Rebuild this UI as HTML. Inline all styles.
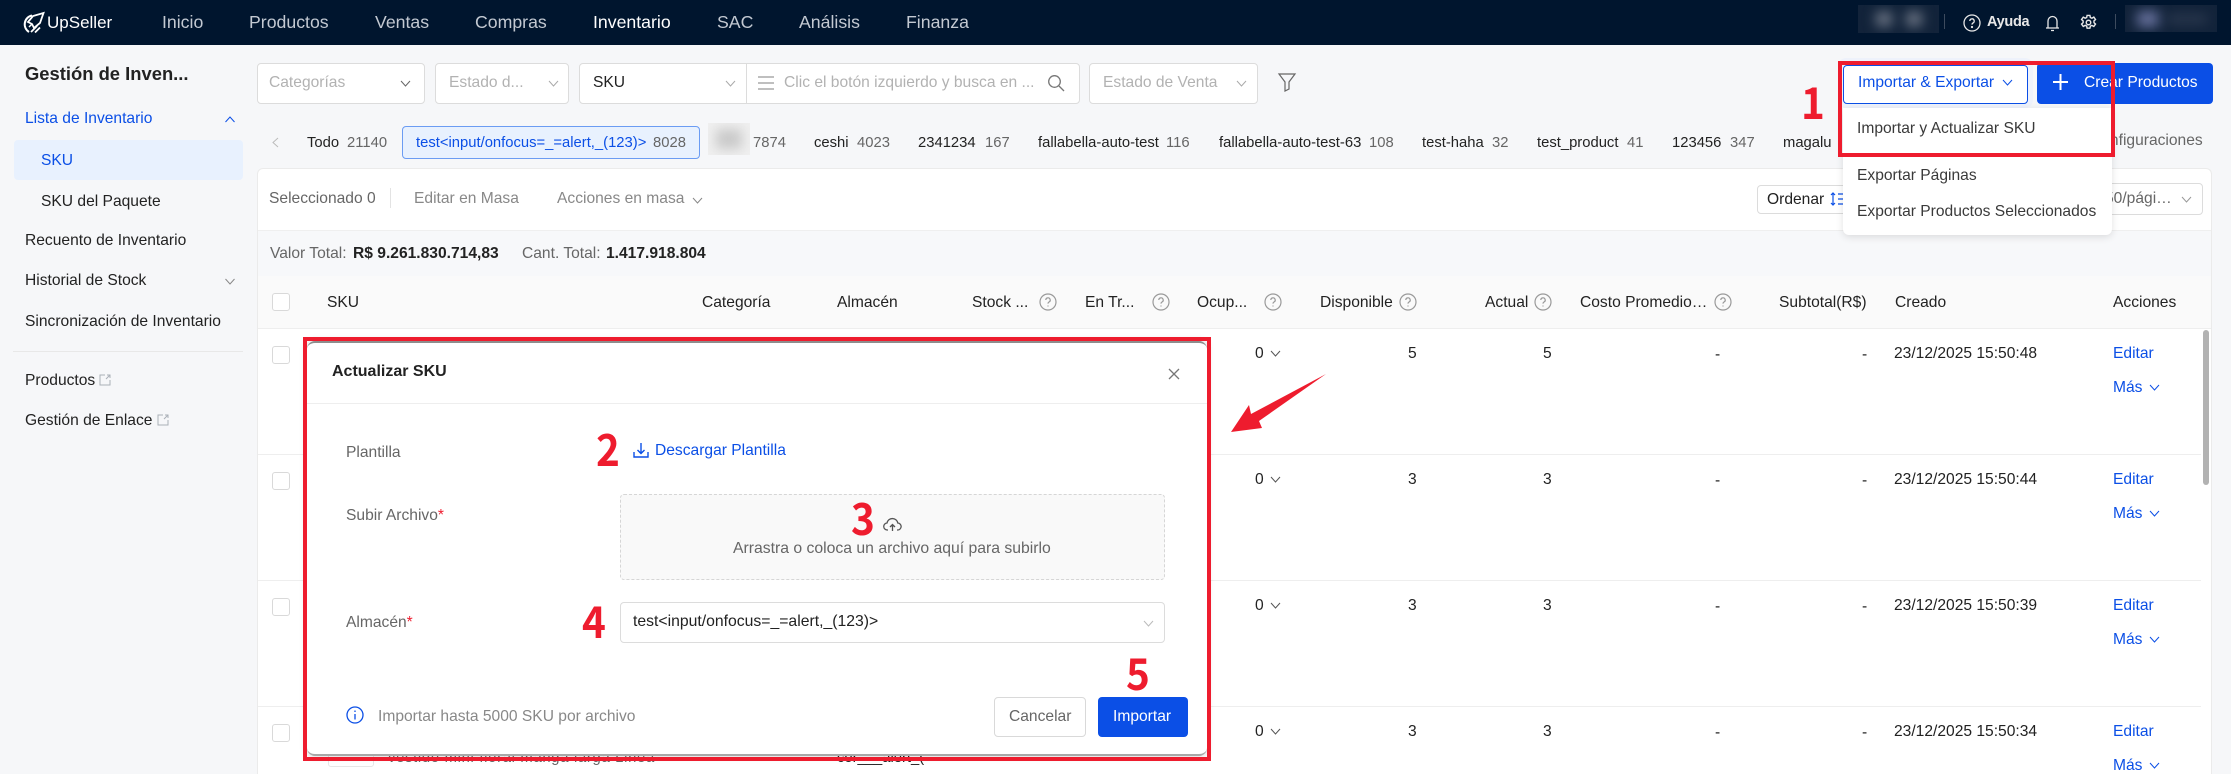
<!DOCTYPE html>
<html lang="es"><head><meta charset="utf-8"><title>UpSeller</title>
<style>
*{box-sizing:border-box}
html,body{margin:0;padding:0;width:2231px;height:774px;overflow:hidden;background:#f6f7f9}
body{position:relative;font-family:"Liberation Sans",Arial,sans-serif;font-size:15.6px;color:#333}
.t{position:absolute;line-height:20px;height:20px;white-space:nowrap;margin-top:1px}
.b{position:absolute}
.g{color:#888}.l{color:#0b4fe6}.k{color:#222}.m{color:#666}
.n{color:#c3c9d2;font-size:17.7px;margin-top:0}
.sel{position:absolute;background:#fff;border:1px solid #dcdcdc;border-radius:4px}
.ph{color:#b2b2b2}
.cb{position:absolute;width:18px;height:18px;border:1px solid #d9d9d9;border-radius:3px;background:#fff}
svg{position:absolute;overflow:visible}
.num{position:absolute;color:#ee1c2e;font-family:"Noto Sans CJK SC","Liberation Sans",sans-serif;font-weight:700;font-size:44px;line-height:44px;height:44px;transform:scaleX(.92);transform-origin:left center}
.blur{position:absolute;filter:blur(6px)}
</style></head><body>

<!-- NAV -->
<div class="b" style="left:0;top:0;width:2231px;height:45px;background:#00152e"></div>
<svg style="left:23px;top:12px" width="22" height="22" viewBox="0 0 22 22" fill="none" stroke="#fff"><path d="M9 3.500A9 9 0 0 0 6 20" stroke-width="2"/><path d="M20.500 1 L10 4 L5 10 L9 12 L11 16 L17 11 Z" stroke-width="1.800"/><path d="M8 20 L14 14 M12 20.500 L17 15.500" stroke-width="1.800"/><path d="M6 15 L9 12" stroke-width="1.500"/></svg>
<span class="t" style="left:47px;top:13px;color:#fff;font-size:17px;margin-top:0">UpSeller</span>
<span class="t n" style="left:162px;top:12px">Inicio</span>
<span class="t n" style="left:249px;top:12px">Productos</span>
<span class="t n" style="left:375px;top:12px">Ventas</span>
<span class="t n" style="left:475px;top:12px">Compras</span>
<span class="t n" style="left:593px;top:12px;color:#fff">Inventario</span>
<span class="t n" style="left:717px;top:12px">SAC</span>
<span class="t n" style="left:799px;top:12px">Análisis</span>
<span class="t n" style="left:906px;top:12px">Finanza</span>
<div class="b" style="left:1858px;top:5px;width:81px;height:28px;overflow:hidden;background:#12233a"><div class="blur" style="left:18px;top:7px;width:16px;height:14px;background:#6d7685"></div><div class="blur" style="left:48px;top:7px;width:16px;height:14px;background:#6d7685"></div></div>
<div class="b" style="left:1944px;top:14px;width:1px;height:15px;background:#3d4b5e"></div>
<svg style="left:1963px;top:14px" width="18" height="18" viewBox="0 0 18 18" fill="none" stroke="#e8e8e8" stroke-width="1.3"><circle cx="9" cy="9" r="8"/><path d="M6.800 7a2.200 2.200 0 1 1 3.200 2c-.7.4-1 .8-1 1.600"/><circle cx="9" cy="13" r=".5"/></svg>
<span class="t" style="left:1987px;top:12px;color:#e8e8e8;font-size:14.500px;font-weight:700;letter-spacing:-.3px;margin-top:0">Ayuda</span>
<svg style="left:2045px;top:14px" width="15" height="18" viewBox="0 0 15 18" fill="none" stroke="#e8e8e8" stroke-width="1.3"><path d="M1 14h13M3 14V7a4.500 4.500 0 0 1 9 0v7M6 16.500h3"/></svg>
<svg style="left:2080px;top:14px" width="17" height="17" viewBox="0 0 24 24" fill="none" stroke="#e8e8e8" stroke-width="2"><circle cx="12" cy="12" r="3.200"/><path d="M10 2h4l.6 3 2.200 1 2.700-1.600 2.400 3.400-2.200 2 .1 2.400 2.100 2-2.400 3.400-2.700-1.500-2.100 1-.7 2.900h-4l-.6-3-2.100-1-2.700 1.600-2.400-3.400 2.200-2v-2.400l-2.200-2 2.400-3.400 2.700 1.500 2.100-1z"/></svg>
<div class="b" style="left:2115px;top:14px;width:1px;height:15px;background:#3d4b5e"></div>
<div class="b" style="left:2125px;top:5px;width:92px;height:27px;overflow:hidden;background:#12233a"><div class="blur" style="left:12px;top:6px;width:22px;height:16px;background:#656f9a"></div><div class="blur" style="left:42px;top:10px;width:40px;height:8px;background:#2f3c52"></div></div>

<!-- SIDEBAR -->
<span class="t" style="left:25px;top:64px;font-weight:700;font-size:18.400px;color:#222;margin-top:0">Gestión de Inven...</span>
<span class="t l" style="left:25px;top:108px">Lista de Inventario</span>
<svg style="left:225px;top:116px" width="10" height="7" fill="none" stroke="#0b4fe6"><path d="M.5 6 5 1l4.500 5"/></svg>
<div class="b" style="left:14px;top:140px;width:229px;height:40px;background:#e8f1fe;border-radius:4px"></div>
<span class="t l" style="left:41px;top:150px">SKU</span>
<span class="t k" style="left:41px;top:191px">SKU del Paquete</span>
<span class="t k" style="left:25px;top:230px">Recuento de Inventario</span>
<span class="t k" style="left:25px;top:270px">Historial de Stock</span>
<svg style="left:225px;top:278px" width="10" height="7" fill="none" stroke="#888"><path d="M.5 1 5 6l4.500-5"/></svg>
<span class="t k" style="left:25px;top:311px">Sincronización de Inventario</span>
<div class="b" style="left:13px;top:351px;width:230px;height:1px;background:#e8e8e8"></div>
<span class="t k" style="left:25px;top:370px">Productos</span>
<svg style="left:99px;top:374px" width="12" height="12" fill="none" stroke="#aab0b8"><path d="M6 1H1v10h10V6M7 5l4-4M8 1h3v3"/></svg>
<span class="t k" style="left:25px;top:410px">Gestión de Enlace</span>
<svg style="left:157px;top:414px" width="12" height="12" fill="none" stroke="#aab0b8"><path d="M6 1H1v10h10V6M7 5l4-4M8 1h3v3"/></svg>

<!-- FILTERS -->
<div class="sel" style="left:257px;top:63px;width:168px;height:41px"></div>
<span class="t ph" style="left:269px;top:72px">Categorías</span>
<svg style="left:400px;top:80px" width="11" height="7" fill="none" stroke="#666"><path d="M1 1l4.500 5L10 1"/></svg>
<div class="sel" style="left:435px;top:63px;width:134px;height:41px"></div>
<span class="t ph" style="left:449px;top:72px">Estado d...</span>
<svg style="left:548px;top:80px" width="11" height="7" fill="none" stroke="#aaa"><path d="M1 1l4.500 5L10 1"/></svg>
<div class="sel" style="left:579px;top:63px;width:501px;height:41px"></div>
<div class="b" style="left:746px;top:64px;width:1px;height:39px;background:#dcdcdc"></div>
<span class="t k" style="left:593px;top:72px">SKU</span>
<svg style="left:725px;top:80px" width="11" height="7" fill="none" stroke="#aaa"><path d="M1 1l4.500 5L10 1"/></svg>
<svg style="left:758px;top:76px" width="16" height="14" fill="none" stroke="#999" stroke-width="1.200"><path d="M0 1h16M0 7h16M0 13h16"/></svg>
<span class="t ph" style="left:784px;top:72px">Clic el botón izquierdo y busca en ...</span>
<svg style="left:1047px;top:74px" width="18" height="18" fill="none" stroke="#777" stroke-width="1.300"><circle cx="7.500" cy="7.500" r="5.800"/><path d="M12 12l5 5"/></svg>
<div class="sel" style="left:1089px;top:63px;width:169px;height:41px"></div>
<span class="t ph" style="left:1103px;top:72px">Estado de Venta</span>
<svg style="left:1236px;top:80px" width="11" height="7" fill="none" stroke="#aaa"><path d="M1 1l4.500 5L10 1"/></svg>
<svg style="left:1278px;top:73px" width="18" height="18" fill="none" stroke="#666" stroke-width="1.200"><path d="M1 1h16l-6 8v7l-4 2V9z"/></svg>

<!-- TABS -->
<svg style="left:272px;top:137px" width="7" height="11" fill="none" stroke="#bbb"><path d="M6 1 1 5.500 6 10"/></svg>
<span class="t k" style="left:307px;top:132px;font-size:14.800px">Todo</span>
<span class="t m" style="left:347px;top:132px;font-size:14.800px">21140</span>
<div class="b" style="left:402px;top:126px;width:298px;height:33px;background:#e8f1fe;border:1px solid #6b9cf3;border-radius:4px"></div>
<span class="t l" style="left:416px;top:132px;font-size:14.800px">test&lt;input/onfocus=_=alert,_(123)&gt;</span>
<span class="t m" style="left:653px;top:132px;font-size:14.800px">8028</span>
<div class="b" style="left:708px;top:123px;width:42px;height:32px;background:#f0f0f0;overflow:hidden"><div class="blur" style="left:8px;top:6px;width:26px;height:20px;background:#c8c8c8"></div></div>
<span class="t m" style="left:753px;top:132px;font-size:14.800px">7874</span>
<span class="t k" style="left:814px;top:132px;font-size:14.800px">ceshi</span>
<span class="t m" style="left:857px;top:132px;font-size:14.800px">4023</span>
<span class="t k" style="left:918px;top:132px;font-size:14.800px">2341234</span>
<span class="t m" style="left:985px;top:132px;font-size:14.800px">167</span>
<span class="t k" style="left:1038px;top:132px;font-size:14.800px">fallabella-auto-test</span>
<span class="t m" style="left:1166px;top:132px;font-size:14.800px">116</span>
<span class="t k" style="left:1219px;top:132px;font-size:14.800px">fallabella-auto-test-63</span>
<span class="t m" style="left:1369px;top:132px;font-size:14.800px">108</span>
<span class="t k" style="left:1422px;top:132px;font-size:14.800px">test-haha</span>
<span class="t m" style="left:1492px;top:132px;font-size:14.800px">32</span>
<span class="t k" style="left:1537px;top:132px;font-size:14.800px">test_product</span>
<span class="t m" style="left:1627px;top:132px;font-size:14.800px">41</span>
<span class="t k" style="left:1672px;top:132px;font-size:14.800px">123456</span>
<span class="t m" style="left:1730px;top:132px;font-size:14.800px">347</span>
<span class="t k" style="left:1783px;top:132px;font-size:14.800px">magalu</span>
<span class="t m" style="left:2090px;top:130px;font-size:15.600px">Configuraciones</span>

<!-- MAIN PANEL -->
<div class="b" style="left:257px;top:168px;width:1955px;height:606px;background:#fff;border:1px solid #ebebeb;border-bottom:0;border-radius:6px 6px 0 0"></div>
<span class="t m" style="left:269px;top:188px">Seleccionado 0</span>
<div class="b" style="left:390px;top:188px;width:1px;height:20px;background:#e3e3e3"></div>
<span class="t g" style="left:414px;top:188px">Editar en Masa</span>
<span class="t g" style="left:557px;top:188px">Acciones en masa</span>
<svg style="left:692px;top:197px" width="11" height="7" fill="none" stroke="#888"><path d="M1 1l4.500 5L10 1"/></svg>
<div class="sel" style="left:1757px;top:185px;width:90px;height:29px"></div>
<span class="t k" style="left:1767px;top:189px">Ordenar</span>
<svg style="left:1830px;top:192px" width="16" height="14" fill="none" stroke="#0b4fe6" stroke-width="1.200"><path d="M3 1v12M1 3l2-2 2 2M1 11l2 2 2-2M8 2h8M8 7h8M8 12h8"/></svg>
<div class="sel" style="left:2060px;top:183px;width:143px;height:32px"></div>
<span class="t m" style="left:2105px;top:188px">50/pági…</span>
<svg style="left:2181px;top:196px" width="11" height="7" fill="none" stroke="#999"><path d="M1 1l4.500 5L10 1"/></svg>

<div class="b" style="left:258px;top:230px;width:1953px;height:46px;background:#f7f8fa;border-top:1px solid #efefef"></div>
<span class="t m" style="left:270px;top:243px">Valor Total:</span>
<span class="t k" style="left:353px;top:243px;font-weight:700">R$ 9.261.830.714,83</span>
<span class="t m" style="left:522px;top:243px">Cant. Total:</span>
<span class="t k" style="left:606px;top:243px;font-weight:700">1.417.918.804</span>

<div class="b" style="left:258px;top:276px;width:1953px;height:53px;background:#fafafa;border-bottom:1px solid #eee"></div>
<div class="cb" style="left:272px;top:293px"></div>
<span class="t k" style="left:327px;top:292px">SKU</span>
<span class="t k" style="left:702px;top:292px">Categoría</span>
<span class="t k" style="left:837px;top:292px">Almacén</span>
<span class="t k" style="left:972px;top:292px">Stock ...</span>
<span class="t k" style="left:1085px;top:292px">En Tr...</span>
<span class="t k" style="left:1197px;top:292px">Ocup...</span>
<span class="t k" style="left:1320px;top:292px">Disponible</span>
<span class="t k" style="left:1485px;top:292px">Actual</span>
<span class="t k" style="left:1580px;top:292px">Costo Promedio…</span>
<span class="t k" style="left:1779px;top:292px">Subtotal(R$)</span>
<span class="t k" style="left:1895px;top:292px">Creado</span>
<span class="t k" style="left:2113px;top:292px">Acciones</span>
<svg style="left:0;top:0" width="1" height="1"><defs><g id="q" fill="none" stroke="#999" stroke-width="1.200"><circle cx="9" cy="9" r="8"/><path d="M6.800 7a2.200 2.200 0 1 1 3.200 2c-.7.4-1 .8-1 1.600M9 12.500v1"/></g><path id="c" d="M1 1l4.500 5L10 1" fill="none"/></defs></svg>
<svg style="left:1039px;top:293px" width="18" height="18"><use href="#q"/></svg>
<svg style="left:1152px;top:293px" width="18" height="18"><use href="#q"/></svg>
<svg style="left:1264px;top:293px" width="18" height="18"><use href="#q"/></svg>
<svg style="left:1399px;top:293px" width="18" height="18"><use href="#q"/></svg>
<svg style="left:1534px;top:293px" width="18" height="18"><use href="#q"/></svg>
<svg style="left:1714px;top:293px" width="18" height="18"><use href="#q"/></svg>

<!-- row lines -->
<div class="b" style="left:258px;top:454px;width:1943px;height:1px;background:#eee"></div>
<div class="b" style="left:258px;top:580px;width:1943px;height:1px;background:#eee"></div>
<div class="b" style="left:258px;top:706px;width:1943px;height:1px;background:#eee"></div>
<div class="b" style="left:2203px;top:330px;width:6px;height:155px;background:#b2b2b2;border-radius:3px"></div>
<div class="cb" style="left:272px;top:346px"></div>
<div class="cb" style="left:272px;top:472px"></div>
<div class="cb" style="left:272px;top:598px"></div>
<div class="cb" style="left:272px;top:724px"></div>
<div class="b" style="left:328px;top:745px;width:46px;height:22px;border:1px solid #e6e6e6;border-radius:3px"></div>
<span class="t m" style="left:388px;top:747px;font-size:14.800px;letter-spacing:.7px">vestido mini floral manga larga Linea</span>
<span class="t k" style="left:837px;top:747px;font-size:14.800px">cor___alert_(</span>

<!-- Row 1 -->
<span class="t k" style="left:1255px;top:343px">0</span><svg style="left:1270px;top:350px" width="11" height="7" stroke="#555"><use href="#c"/></svg>
<span class="t k" style="left:1408px;top:343px">5</span><span class="t k" style="left:1543px;top:343px">5</span>
<span class="t k" style="left:1715px;top:344px">-</span><span class="t k" style="left:1862px;top:344px">-</span>
<span class="t k" style="left:1894px;top:343px">23/12/2025 15:50:48</span>
<span class="t l" style="left:2113px;top:343px">Editar</span><span class="t l" style="left:2113px;top:377px">Más</span><svg style="left:2149px;top:384px" width="11" height="7" stroke="#0b4fe6"><use href="#c"/></svg>
<!-- Row 2 -->
<span class="t k" style="left:1255px;top:469px">0</span><svg style="left:1270px;top:476px" width="11" height="7" stroke="#555"><use href="#c"/></svg>
<span class="t k" style="left:1408px;top:469px">3</span><span class="t k" style="left:1543px;top:469px">3</span>
<span class="t k" style="left:1715px;top:470px">-</span><span class="t k" style="left:1862px;top:470px">-</span>
<span class="t k" style="left:1894px;top:469px">23/12/2025 15:50:44</span>
<span class="t l" style="left:2113px;top:469px">Editar</span><span class="t l" style="left:2113px;top:503px">Más</span><svg style="left:2149px;top:510px" width="11" height="7" stroke="#0b4fe6"><use href="#c"/></svg>
<!-- Row 3 -->
<span class="t k" style="left:1255px;top:595px">0</span><svg style="left:1270px;top:602px" width="11" height="7" stroke="#555"><use href="#c"/></svg>
<span class="t k" style="left:1408px;top:595px">3</span><span class="t k" style="left:1543px;top:595px">3</span>
<span class="t k" style="left:1715px;top:596px">-</span><span class="t k" style="left:1862px;top:596px">-</span>
<span class="t k" style="left:1894px;top:595px">23/12/2025 15:50:39</span>
<span class="t l" style="left:2113px;top:595px">Editar</span><span class="t l" style="left:2113px;top:629px">Más</span><svg style="left:2149px;top:636px" width="11" height="7" stroke="#0b4fe6"><use href="#c"/></svg>
<!-- Row 4 -->
<span class="t k" style="left:1255px;top:721px">0</span><svg style="left:1270px;top:728px" width="11" height="7" stroke="#555"><use href="#c"/></svg>
<span class="t k" style="left:1408px;top:721px">3</span><span class="t k" style="left:1543px;top:721px">3</span>
<span class="t k" style="left:1715px;top:722px">-</span><span class="t k" style="left:1862px;top:722px">-</span>
<span class="t k" style="left:1894px;top:721px">23/12/2025 15:50:34</span>
<span class="t l" style="left:2113px;top:721px">Editar</span><span class="t l" style="left:2113px;top:755px">Más</span><svg style="left:2149px;top:762px" width="11" height="7" stroke="#0b4fe6"><use href="#c"/></svg>

<!-- MODAL -->
<div class="b" style="left:307px;top:341px;width:900px;height:415px;background:#fff;border-radius:8px;border-top:2px solid #8d8d8d;border-bottom:2px solid #a8a8a8;box-shadow:0 0 8px rgba(0,0,0,.2)"></div>
<div class="b" style="left:303px;top:337px;width:908px;height:424px;border:4px solid #ee1c2e"></div>
<span class="t" style="left:332px;top:361px;font-weight:700;color:#222;font-size:16px">Actualizar SKU</span>
<svg style="left:1168px;top:368px" width="12" height="12" fill="none" stroke="#777" stroke-width="1.300"><path d="M1 1l10 10M11 1 1 11"/></svg>
<div class="b" style="left:307px;top:403px;width:900px;height:1px;background:#eee"></div>
<span class="t m" style="left:346px;top:442px">Plantilla</span>
<span class="num" style="left:596px;top:425px">2</span>
<svg style="left:633px;top:442px" width="16" height="16" fill="none" stroke="#0b4fe6" stroke-width="1.400"><path d="M8 1v10M4.500 8 8 11.500 11.500 8M1 10v5h14v-5"/></svg>
<span class="t l" style="left:655px;top:440px">Descargar Plantilla</span>
<span class="t m" style="left:346px;top:505px">Subir Archivo<span style="color:#ee1c2e">*</span></span>
<div class="b" style="left:620px;top:494px;width:545px;height:86px;background:#f9f9f9;border:1px dashed #d6d6d6;border-radius:4px"></div>
<span class="num" style="left:851px;top:494px">3</span>
<svg style="left:883px;top:518px" width="19" height="14" fill="none" stroke="#555" stroke-width="1.300"><path d="M5 12H4.500a3.500 3.500 0 0 1-.5-7 5.500 5.500 0 0 1 10.800 0 3.500 3.500 0 0 1-.3 7H14M9.500 13V7M7 9l2.500-2.500L12 9"/></svg>
<span class="t m" style="left:733px;top:538px;font-size:15.750px">Arrastra o coloca un archivo aquí para subirlo</span>
<span class="t m" style="left:346px;top:612px">Almacén<span style="color:#ee1c2e">*</span></span>
<span class="num" style="left:582px;top:597px">4</span>
<div class="sel" style="left:620px;top:602px;width:545px;height:41px"></div>
<span class="t k" style="left:633px;top:611px;font-size:15.750px">test&lt;input/onfocus=_=alert,_(123)&gt;</span>
<svg style="left:1143px;top:620px" width="11" height="7" fill="none" stroke="#bbb"><path d="M1 1l4.500 5L10 1"/></svg>
<span class="num" style="left:1126px;top:649px">5</span>
<svg style="left:346px;top:706px" width="18" height="18" fill="none" stroke="#0b4fe6" stroke-width="1.300"><circle cx="9" cy="9" r="8"/><path d="M9 8v5.500M9 4.500v1.500"/></svg>
<span class="t g" style="left:378px;top:706px">Importar hasta 5000 SKU por archivo</span>
<div class="b" style="left:994px;top:697px;width:92px;height:40px;background:#fff;border:1px solid #d9d9d9;border-radius:4px"></div>
<span class="t m" style="left:1009px;top:706px">Cancelar</span>
<div class="b" style="left:1098px;top:697px;width:90px;height:40px;background:#0b4fe6;border-radius:4px"></div>
<span class="t" style="left:1113px;top:706px;color:#fff">Importar</span>

<!-- Arrow -->
<svg style="left:0;top:0" width="2231" height="774"><polygon points="1231,432 1249,405 1251,414 1326,374 1259,421 1262,428" fill="#ee1c2e"/></svg>

<!-- TOP RIGHT -->
<div class="b" style="left:1838px;top:58px;width:195px;height:50px;background:#eef2fb;border-radius:8px"></div>
<div class="b" style="left:1843px;top:65px;width:185px;height:39px;background:#fff;border:1px solid #0b4fe6;border-radius:4px"></div>
<span class="t l" style="left:1858px;top:72px">Importar &amp; Exportar</span>
<svg style="left:2002px;top:79px" width="11" height="7" fill="none" stroke="#0b4fe6"><path d="M1 1l4.500 5L10 1"/></svg>
<div class="b" style="left:2037px;top:63px;width:176px;height:41px;background:#0b4fe6;border-radius:4px"></div>
<svg style="left:2053px;top:74px" width="15" height="16" fill="none" stroke="#fff" stroke-width="2"><path d="M7.500 0v16M0 8h15"/></svg>
<span class="t" style="left:2084px;top:72px;color:#fff">Crear Productos</span>
<div class="b" style="left:1843px;top:108px;width:269px;height:127px;background:#fff;border-radius:0 0 6px 6px;box-shadow:0 2px 8px rgba(0,0,0,.12)"></div>
<span class="t" style="left:1857px;top:118px;color:#3a3a3a">Importar y Actualizar SKU</span>
<span class="t" style="left:1857px;top:165px;color:#3a3a3a">Exportar Páginas</span>
<span class="t" style="left:1857px;top:201px;color:#3a3a3a">Exportar Productos Seleccionados</span>
<div class="b" style="left:1838px;top:61px;width:277px;height:96px;border:4px solid #ee1c2e"></div>
<span class="num" style="left:1801px;top:78px">1</span>

</body></html>
